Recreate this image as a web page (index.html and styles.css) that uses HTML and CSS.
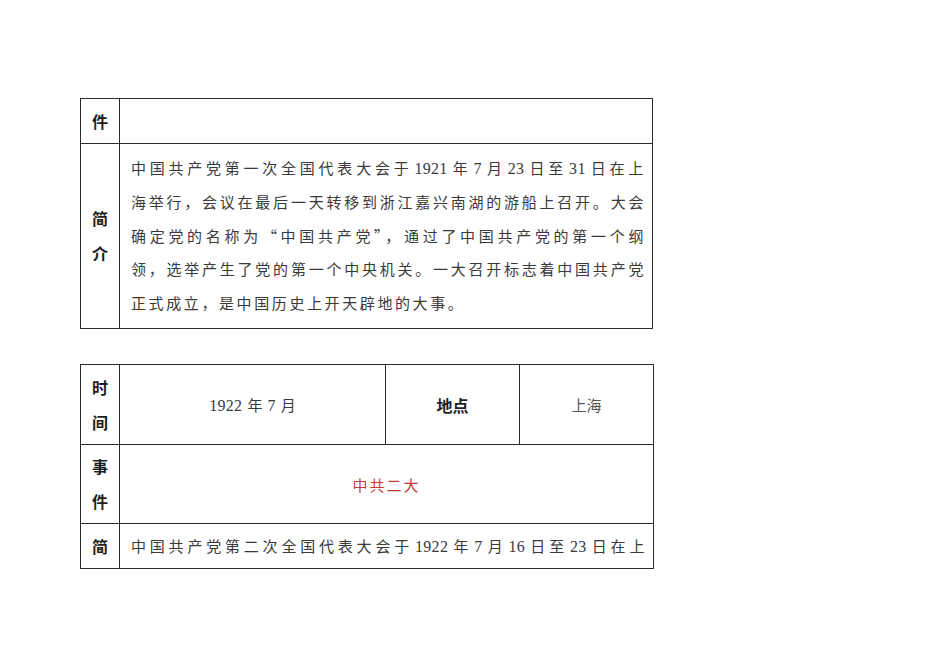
FILE: index.html
```html
<!DOCTYPE html>
<html lang="zh-CN">
<head>
<meta charset="utf-8">
<title>中共党史</title>
<link rel="stylesheet" href="styles.css">
</head>
<body>
<div class="page">
  <table class="sheet first">
    <colgroup><col class="c-label"><col class="c-rest"></colgroup>
    <tr class="r-short">
      <td class="label">件</td>
      <td></td>
    </tr>
    <tr class="r-intro">
      <td class="label">简<br>介</td>
      <td class="body">
        <span class="ln">中国共产党第一次全国代表大会于<span class="num">1921</span>年<span class="num">7</span>月<span class="num">23</span>日至<span class="num">31</span>日在上</span>
        <span class="ln">海举行，会议在最后一天转移到浙江嘉兴南湖的游船上召开。大会</span>
        <span class="ln">确定党的名称为“中国共产党”，通过了中国共产党的第一个纲</span>
        <span class="ln">领，选举产生了党的第一个中央机关。一大召开标志着中国共产党</span>
        <span class="ln last">正式成立，是中国历史上开天辟地的大事。</span>
      </td>
    </tr>
  </table>

  <table class="sheet second">
    <colgroup><col class="c-label"><col class="c-time"><col class="c-place"><col class="c-city"></colgroup>
    <tr class="r-tall">
      <td class="label">时<br>间</td>
      <td class="value"><span class="num">1922</span>年<span class="num">7</span>月</td>
      <td class="head">地点</td>
      <td class="value city">上海</td>
    </tr>
    <tr class="r-event">
      <td class="label">事<br>件</td>
      <td class="value event" colspan="3">中共二大</td>
    </tr>
    <tr class="r-short">
      <td class="label">简</td>
      <td class="body single" colspan="3">
        <span class="ln">中国共产党第二次全国代表大会于<span class="num">1922</span>年<span class="num">7</span>月<span class="num">16</span>日至<span class="num">23</span>日在上</span>
      </td>
    </tr>
  </table>
</div>
</body>
</html>
```

FILE: styles.css
```css
html, body {
  margin: 0;
  padding: 0;
  background: #ffffff;
}

body {
  font-family: "Noto Sans CJK SC", "Liberation Serif", sans-serif;
  color: #333333;
}

.page {
  padding: 98px 0 0 80px;
  display: flex;
  flex-direction: column;
  gap: 35px;
}

.sheet {
  border-collapse: collapse;
  table-layout: fixed;
  width: 573px;
}

.sheet td {
  border: 1px solid #2b2b2b;
  padding: 0;
  vertical-align: middle;
}

.c-label { width: 39px; }
.c-time { width: 266px; }
.c-place { width: 134px; }
.c-city { width: 134px; }

.r-short { height: 45px; }
.r-intro { height: 185px; }
.r-tall { height: 80px; }
.r-event { height: 79px; }

.label {
  text-align: center;
  font-size: 16px;
  line-height: 35px;
  font-weight: 600;
  color: #1e1e1e;
}

.body {
  padding: 6px 6px 8px 11px !important;
  font-size: 15px;
  line-height: 33.5px;
  letter-spacing: 2.6px;
  color: #3a3a3a;
}

.body.single {
  padding: 4px 6px 4px 11px !important;
}

.ln {
  display: block;
  text-align: justify;
  text-align-last: justify;
  white-space: nowrap;
}

.ln.last {
  text-align-last: left;
}

.num {
  font-family: "Liberation Serif", serif;
  font-size: 16px;
  letter-spacing: 0.3px;
  margin: 0 4px 0 2px;
}

.value {
  text-align: center;
  font-size: 15px;
  color: #3a3a3a;
}

.value .num {
  margin: 0 5px;
}

.value .num:first-child {
  margin-left: 0;
}

.head {
  text-align: center;
  font-size: 16px;
  font-weight: 600;
  color: #1e1e1e;
}

.city {
  color: #555555;
}

.event {
  color: #c83a36;
  letter-spacing: 2px;
}
```
